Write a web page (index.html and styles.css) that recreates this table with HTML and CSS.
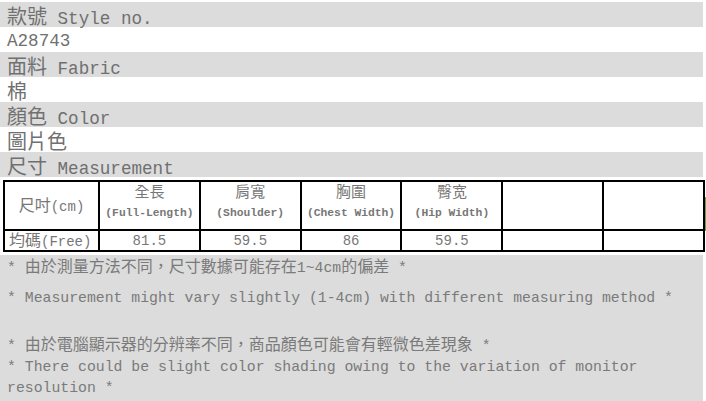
FILE: index.html
```html
<!DOCTYPE html>
<html lang="zh-Hant">
<head>
    <meta charset="UTF-8">
    <meta name="viewport" content="width=device-width, initial-scale=1.0">
    <title>Style A28743</title>
    <link rel="stylesheet" href="styles.css">
</head>
<body>
    <div class="spec-sheet">
        <div class="spec-row label"><span class="zh">款號</span> Style no.</div>
        <div class="spec-row">A28743</div>
        <div class="spec-row label"><span class="zh">面料</span> Fabric</div>
        <div class="spec-row"><span class="zh">棉</span></div>
        <div class="spec-row label"><span class="zh">顏色</span> Color</div>
        <div class="spec-row"><span class="zh">圖片色</span></div>
        <div class="spec-row label"><span class="zh">尺寸</span> Measurement</div>

        <div class="size-wrap">
            <table class="size-table">
                <colgroup>
                    <col class="col-first">
                    <col><col><col><col><col><col>
                </colgroup>
                <thead>
                    <tr>
                        <th class="row-head"><span class="zh">尺吋</span>(cm)</th>
                        <th><div class="zh">全長</div><div class="en">(Full-Length)</div></th>
                        <th><div class="zh">肩寬</div><div class="en">(Shoulder)</div></th>
                        <th><div class="zh">胸圍</div><div class="en">(Chest Width)</div></th>
                        <th><div class="zh">臀宽</div><div class="en">(Hip Width)</div></th>
                        <th></th>
                        <th></th>
                    </tr>
                </thead>
                <tbody>
                    <tr>
                        <td class="size-name"><span class="zh">均碼</span>(Free)</td>
                        <td>81.5</td>
                        <td>59.5</td>
                        <td>86</td>
                        <td>59.5</td>
                        <td></td>
                        <td></td>
                    </tr>
                </tbody>
            </table>
            <span class="edge-mark"></span>
        </div>

        <div class="notes">
            <div class="note">* <span class="zh">由於測量方法不同，尺寸數據可能存在</span>1~4cm<span class="zh">的偏差</span> *</div>
            <div class="note note-en">* Measurement might vary slightly (1-4cm) with different measuring method *</div>
            <div class="note note-gap">* <span class="zh">由於電腦顯示器的分辨率不同，商品顏色可能會有輕微色差現象</span> *</div>
            <div class="note">* There could be slight color shading owing to the variation of monitor resolution *</div>
        </div>
    </div>
</body>
</html>
```

FILE: styles.css
```css
* {
    margin: 0;
    padding: 0;
    box-sizing: border-box;
}

body {
    font-family: 'Liberation Mono', 'Noto Sans CJK TC', monospace;
    background: #ffffff;
    color: #707070;
}

.spec-sheet {
    width: 706px;
    padding-top: 2px;
}

.zh {
    font-family: 'Noto Sans CJK TC', sans-serif;
    line-height: 1;
}

/* header rows */
.spec-row {
    width: 703px;
    height: 25px;
    line-height: 21px;
    padding: 4px 0 0 7px;
    font-size: 17.6px;
    white-space: nowrap;
}

.spec-row .zh {
    font-size: 20px;
}

.spec-row.label {
    background: #dcdcdc;
}

/* size table */
.size-wrap {
    position: relative;
    margin: 3px 0 0 3px;
}

.size-table {
    width: 702px;
    table-layout: fixed;
    border-collapse: collapse;
    font-size: 14px;
    color: #777777;
}

.col-first {
    width: 95px;
}

.size-table th,
.size-table td {
    border: 2px solid #000000;
    text-align: center;
    font-weight: normal;
    white-space: nowrap;
}

.size-table thead th {
    height: 49px;
    vertical-align: top;
}

.size-table thead th.row-head {
    vertical-align: middle;
}

.size-table th .zh {
    font-size: 15px;
    line-height: 18px;
}

.size-table th .en {
    font-size: 11.3px;
    font-weight: bold;
    line-height: 27px;
}

.size-table .row-head .zh,
.size-table .size-name .zh {
    font-size: 16px;
    line-height: 16px;
}

.size-table td {
    height: 20px;
    line-height: 16px;
}

.size-table .size-name {
    text-align: left;
    padding-left: 4px;
}

.edge-mark {
    position: absolute;
    right: -2px;
    top: 17px;
    width: 3px;
    height: 34px;
    background: #6e9e3e;
}

/* notes */
.notes {
    width: 703px;
    margin-top: 3px;
    background: #dcdcdc;
    padding: 2px 0 4px 7px;
    font-size: 14.8px;
    color: #7a7a7a;
}

.note {
    line-height: 21px;
}

.note .zh {
    font-size: 16px;
}

.note-en {
    margin-top: 9px;
}

.note-gap {
    margin-top: 26px;
}
```
